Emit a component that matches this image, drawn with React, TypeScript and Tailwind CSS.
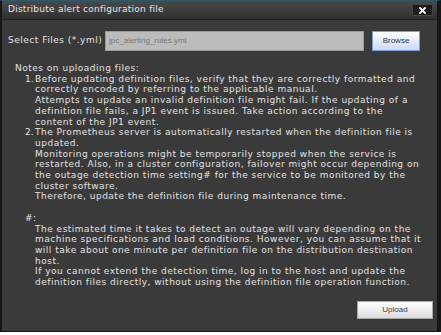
import React from "react";

const notesFont = { fontFamily: '"DejaVu Sans", Verdana, sans-serif' };
const arial = { fontFamily: '"Liberation Sans", Arial, sans-serif' };

export default function App() {
  return (
    <div className="w-[441px] h-[335px] bg-white">
      <div
        className="w-[441px] h-[332px] flex flex-col bg-[#3a3a3a] border-l-2 border-r-[4px] border-b border-t border-l-[#161616] border-r-[#161616] border-b-[#111] border-t-[#2c5a6a] text-[#e2e2e2]"
        style={notesFont}
      >
        {/* Title bar */}
        <div className="h-[19px] flex items-center justify-between pl-[6px] pr-[4px] bg-gradient-to-b from-[#4a4a4a] to-[#303030] border-b border-[#222]">
          <span className="text-[9px] tracking-[0.25px] text-[#e6e6e6]">
            Distribute alert configuration file
          </span>
          <button className="w-[21px] h-[12px] flex items-center justify-center bg-[#1d1d1d] border border-[#444] rounded-[1px]">
            <svg width="7" height="7" viewBox="0 0 7 7">
              <path d="M1 1L6 6M6 1L1 6" stroke="#fff" strokeWidth="1.8" strokeLinecap="square" />
            </svg>
          </button>
        </div>

        {/* File row */}
        <div className="flex items-center mt-[11px] pl-[6px]">
          <span className="w-[97px] text-[9px] tracking-[0.5px] text-[#e2e2e2]">
            Select Files (*.yml)
          </span>
          <div
            className="w-[259px] h-[20px] flex items-center pl-[3px] bg-[#bcbcbc] border border-[#9a9a9a] text-[8px] text-[#777]"
            style={arial}
          >
            jpc_alerting_rules.yml
          </div>
          <button
            className="ml-[8px] w-[48px] h-[20px] flex items-center justify-center bg-gradient-to-b from-[#ffffff] to-[#c9d9f7] border border-[#7f9fd6] text-[8px] text-[#333]"
            style={arial}
          >
            Browse
          </button>
        </div>

        {/* Notes */}
        <div className="mt-[12px] pl-[13px] text-[9px] leading-[10.7px] tracking-[0.5px] whitespace-nowrap">
          <div>Notes on uploading files:</div>
          <div className="flex">
            <span className="w-[10px] ml-[10px] tracking-normal">1.</span>
            <div>
              Before updating definition files, verify that they are correctly formatted and
              <br />
              correctly encoded by referring to the applicable manual.
              <br />
              Attempts to update an invalid definition file might fail. If the updating of a
              <br />
              definition file fails, a JP1 event is issued. Take action according to the
              <br />
              content of the JP1 event.
            </div>
          </div>
          <div className="flex">
            <span className="w-[10px] ml-[10px] tracking-normal">2.</span>
            <div>
              The Prometheus server is automatically restarted when the definition file is
              <br />
              updated.
              <br />
              Monitoring operations might be temporarily stopped when the service is
              <br />
              restarted. Also, in a cluster configuration, failover might occur depending on
              <br />
              the outage detection time setting# for the service to be monitored by the
              <br />
              cluster software.
              <br />
              Therefore, update the definition file during maintenance time.
            </div>
          </div>
          <div className="mt-[10.7px] ml-[10px]">#:</div>
          <div className="ml-[20px]">
            The estimated time it takes to detect an outage will vary depending on the
            <br />
            machine specifications and load conditions. However, you can assume that it
            <br />
            will take about one minute per definition file on the distribution destination
            <br />
            host.
            <br />
            If you cannot extend the detection time, log in to the host and update the
            <br />
            definition files directly, without using the definition file operation function.
          </div>
        </div>

        {/* Footer */}
        <div className="flex justify-end mt-[13px] pr-[4px]">
          <button
            className="w-[76px] h-[18px] shrink-0 flex items-center justify-center bg-gradient-to-b from-[#ffffff] to-[#dcdcdc] border border-[#a8a8a8] text-[8px] text-[#444]"
            style={arial}
          >
            Upload
          </button>
        </div>
      </div>
    </div>
  );
}
